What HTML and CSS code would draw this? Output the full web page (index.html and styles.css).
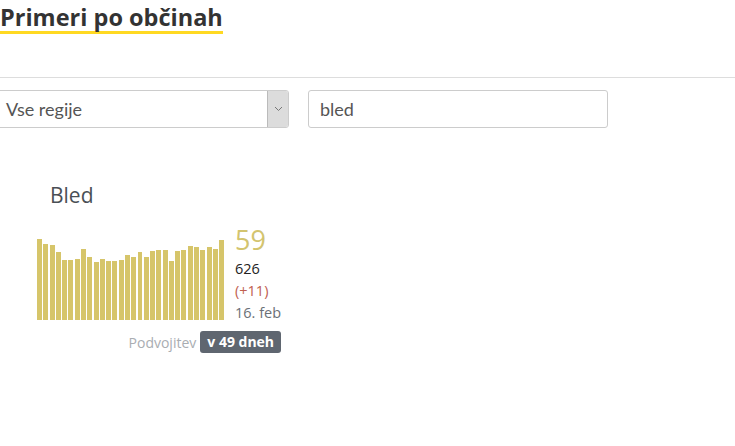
FILE: index.html
```html
<!DOCTYPE html>
<html>
	<head>
		<meta charset="utf-8"/>
		<title>Primeri po občinah</title>
		<meta name="viewport" content="width=device-width, initial-scale=1"/>
		<link rel="stylesheet" href="styles.css">
	</head>
	<body>
		<div class="municipalities">
			<h2 class="title"><span class="title-txt">Primeri po občinah</span></h2>
			<div class="filters">
				<div class="select-box">
					<span class="select-value">Vse regije</span>
					<span class="select-arrow">
						<svg width="9" height="6" viewBox="0 0 9 6"><path d="M1 1l3.5 3.5L8 1" fill="none" stroke="#777" stroke-width="1"/></svg>
					</span>
				</div>
				<input type="text" class="search-box" value="bled"/>
			</div>
			<div class="cards">
				<div class="card">
					<h3 class="card-name">Bled</h3>
					<div class="card-body">
						<div class="bars">
							<span class="bar" style="height:81px"></span>
							<span class="bar" style="height:76px"></span>
							<span class="bar" style="height:75px"></span>
							<span class="bar" style="height:68px"></span>
							<span class="bar" style="height:60px"></span>
							<span class="bar" style="height:60px"></span>
							<span class="bar" style="height:61px"></span>
							<span class="bar" style="height:71px"></span>
							<span class="bar" style="height:63px"></span>
							<span class="bar" style="height:58px"></span>
							<span class="bar" style="height:61px"></span>
							<span class="bar" style="height:59px"></span>
							<span class="bar" style="height:59px"></span>
							<span class="bar" style="height:60px"></span>
							<span class="bar" style="height:65px"></span>
							<span class="bar" style="height:63px"></span>
							<span class="bar" style="height:68px"></span>
							<span class="bar" style="height:63px"></span>
							<span class="bar" style="height:69px"></span>
							<span class="bar" style="height:70px"></span>
							<span class="bar" style="height:70px"></span>
							<span class="bar" style="height:59px"></span>
							<span class="bar" style="height:69px"></span>
							<span class="bar" style="height:70px"></span>
							<span class="bar" style="height:74px"></span>
							<span class="bar" style="height:73px"></span>
							<span class="bar" style="height:70px"></span>
							<span class="bar" style="height:73px"></span>
							<span class="bar" style="height:71px"></span>
							<span class="bar" style="height:80px"></span>
						</div>
						<div class="card-stats">
							<div class="stat-active">59</div>
							<div class="stat-total">626</div>
							<div class="stat-diff">(+11)</div>
							<div class="stat-date">16. feb</div>
						</div>
					</div>
					<div class="card-footer">
						<span class="doubling-label">Podvojitev</span>
						<span class="doubling-badge">v 49 dneh</span>
					</div>
				</div>
			</div>
		</div>
	</body>
</html>
```

FILE: styles.css
```css
body{margin: 0px;font-family: 'Open Sans', sans-serif;color: #333;background: #fff;}
.title{margin: 0px;padding-top: 3px;font-family: 'Open Sans', sans-serif;font-size: 23.5px;font-weight: 700;line-height: 28px;color: #333;}
.title-txt{display: inline-block;border-bottom: 3px solid #ffd922;line-height: 27px;}
.filters{display: flex;align-items: center;gap: 19px;margin-top: 43px;padding-top: 12px;border-top: 1px solid #ddd;}
.select-box{display: flex;align-items: stretch;width: 300px;height: 38px;margin-left: -11px;box-sizing: border-box;border: 1px solid #ccc;border-radius: 3px;background: #fff;}
.select-value{flex: 1;display: flex;align-items: center;padding-left: 16px;font-family: 'Lato', sans-serif;font-size: 18px;color: #555;}
.select-arrow{display: flex;align-items: center;justify-content: center;width: 20px;background: #dcdcdc;border-left: 1px solid #bbb;border-radius: 0 2px 2px 0;}
.search-box{width: 300px;height: 38px;box-sizing: border-box;padding: 0 11px;border: 1px solid #ccc;border-radius: 3px;font-family: 'Lato', sans-serif;font-size: 18px;color: #555;outline: none;}
.cards{display: flex;padding: 54px 0 0 37px;}
.card{display: flex;flex-direction: column;white-space: nowrap;}
.card-name{margin: 0 0 0 13px;font-size: 21px;font-weight: 400;line-height: 26px;color: #4a4f55;}
.card-body{display: flex;align-items: flex-end;gap: 11px;margin-top: 17px;}
.bars{display: flex;align-items: flex-end;gap: 1.3px;width: 187px;height: 82px;}
.bar{flex: 1;background: #d6c56a;}
.card-stats{display: flex;flex-direction: column;margin-bottom: -4px;}
.stat-active{margin-bottom: 3px;font-size: 27px;line-height: 30px;color: #d3c46f;}
.stat-total{font-size: 14.5px;line-height: 22px;color: #222;}
.stat-diff{font-size: 14.5px;line-height: 22px;color: #c0604f;}
.stat-date{font-size: 14.5px;line-height: 22px;color: #6b7077;}
.card-footer{display: flex;align-items: center;justify-content: flex-end;gap: 4px;margin-top: 11px;}
.doubling-label{font-size: 14px;color: #a9adb2;}
.doubling-badge{padding: 1px 7px;border-radius: 3px;background: #5f6670;color: #fff;font-size: 14px;font-weight: 700;line-height: 20px;}
```
